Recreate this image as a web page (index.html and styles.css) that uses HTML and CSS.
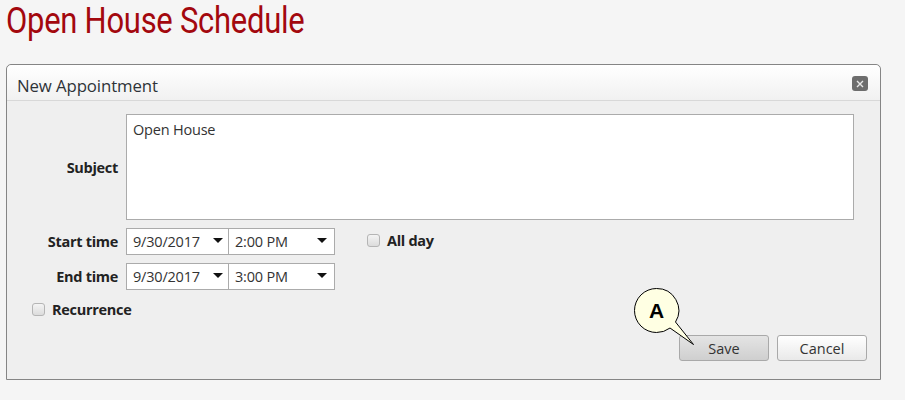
FILE: index.html
```html
<!DOCTYPE html>
<html>
<head>
<meta charset="utf-8">
<link rel="stylesheet" href="styles.css">
</head>
<body>
<h1 class="page-title"><span class="title-text">Open House Schedule</span></h1>
<div class="dialog">
  <div class="dialog-header">
    <span class="dialog-title">New Appointment</span>
    <span class="close-btn"><svg width="10" height="10" viewBox="0 0 10 10"><path d="M2 2L8 8M8 2L2 8" stroke="#e8e8e8" stroke-width="1.4"/></svg></span>
  </div>
  <div class="dialog-body">
    <div class="form-grid">
      <label class="field-label subject-label">Subject</label>
      <div class="subject-box">Open House</div>

      <label class="field-label">Start time</label>
      <div class="control-row">
        <div class="select date-select"><span>9/30/2017</span><span class="caret"></span></div>
        <div class="select time-select"><span>2:00 PM</span><span class="caret"></span></div>
        <div class="check allday"><span class="box"></span><span class="check-label">All day</span></div>
      </div>

      <label class="field-label">End time</label>
      <div class="control-row">
        <div class="select date-select"><span>9/30/2017</span><span class="caret"></span></div>
        <div class="select time-select"><span>3:00 PM</span><span class="caret"></span></div>
      </div>
    </div>
    <div class="check recurrence"><span class="box"></span><span class="check-label">Recurrence</span></div>
    <div class="button-row">
      <div class="btn btn-save">Save
        <svg class="callout" width="70" height="70" viewBox="0 0 70 70">
          <path d="M24.5 2.5 A22 22 0 0 0 24.5 46.5 A22 22 0 0 0 38 42 L61.5 58.5 L43.5 36 A22 22 0 0 0 24.5 2.5 Z" fill="#ffffe3" stroke="#000" stroke-width="1"/>
          <text x="24.5" y="32" text-anchor="middle" class="callout-text">A</text>
        </svg>
      </div>
      <div class="btn btn-cancel">Cancel</div>
    </div>
  </div>
</div>
</body>
</html>
```
FILE: styles.css
```css
html, body {
  margin: 0;
  padding: 0;
  background: #f5f5f5;
}
body {
  font-family: "Open Sans", "Noto Sans", sans-serif;
  color: #333;
}
.page-title {
  margin: 0;
  padding: 1px 0 0 6px;
  height: 64px;
  box-sizing: border-box;
  font-family: Roboto, sans-serif;
  font-weight: 400;
  font-size: 36px;
  line-height: 40px;
  color: #a3080e;
}
.title-text {
  display: inline-block;
  transform: scaleX(0.86);
  transform-origin: left center;
  letter-spacing: -0.3px;
}
.dialog {
  margin-left: 6px;
  width: 875px;
  height: 316px;
  box-sizing: border-box;
  border: 1px solid #858585;
  border-radius: 5px 5px 0 0;
  background: #efefef;
  display: flex;
  flex-direction: column;
}
.dialog-header {
  height: 36px;
  box-sizing: border-box;
  border-bottom: 1px solid #d8d8d8;
  background: linear-gradient(#ffffff, #f1f1f1);
  border-radius: 5px 5px 0 0;
  display: flex;
  align-items: center;
  justify-content: space-between;
  padding: 6px 12px 0 10px;
}
.dialog-title {
  font-size: 16.8px;
  color: #2e3338;
  letter-spacing: -0.1px;
}
.close-btn {
  width: 16px;
  height: 15px;
  border-radius: 3px;
  background: #6d6d6d;
  display: flex;
  align-items: center;
  justify-content: center;
  margin-top: -4px;
}
.dialog-body {
  flex: 1;
  padding: 13px 26px 0 0;
  display: flex;
  flex-direction: column;
}
.form-grid {
  display: grid;
  grid-template-columns: 111px 1fr;
  column-gap: 8px;
  row-gap: 8px;
  align-items: center;
}
.field-label {
  text-align: right;
  font-weight: 700;
  font-size: 14.5px;
  color: #222;
  letter-spacing: -0.3px;
}
.subject-box {
  height: 106px;
  box-sizing: border-box;
  border: 1px solid #ababab;
  background: #fff;
  padding: 5px 6px;
  font-size: 14.5px;
  color: #333;
  letter-spacing: -0.2px;
}
.control-row {
  display: flex;
  align-items: center;
}
.select {
  height: 27px;
  box-sizing: border-box;
  border: 1px solid #ababab;
  background: #fff;
  display: flex;
  align-items: center;
  justify-content: space-between;
  padding: 0 5px 0 6px;
  font-size: 14.5px;
  color: #333;
  letter-spacing: -0.2px;
}
.date-select { width: 103px; }
.time-select { width: 107px; margin-left: -1px; padding-right: 7px; }
.caret {
  width: 0;
  height: 0;
  border-left: 5px solid transparent;
  border-right: 5px solid transparent;
  border-top: 5px solid #111;
  margin-top: -3px;
}
.check {
  display: flex;
  align-items: center;
}
.box {
  width: 13px;
  height: 13px;
  box-sizing: border-box;
  border: 1px solid #b5b5b5;
  border-radius: 3px;
  background: linear-gradient(#f4f4f4, #dcdcdc);
}
.check-label {
  margin-left: 7px;
  font-weight: 700;
  font-size: 14.5px;
  color: #222;
  letter-spacing: -0.3px;
}
.allday {
  margin-left: 32px;
  margin-top: -2px;
}
.recurrence {
  margin: 10px 0 0 25px;
}
.button-row {
  display: flex;
  justify-content: flex-end;
  gap: 8px;
  margin: 16px -13px 0 0;
}
.btn {
  position: relative;
  width: 90px;
  height: 26px;
  box-sizing: border-box;
  border: 1px solid #a9a9a9;
  border-radius: 3px;
  display: flex;
  align-items: center;
  justify-content: center;
  font-size: 14.5px;
  color: #333;
}
.btn-save {
  background: linear-gradient(#e4e4e4, #cfcfcf);
}
.btn-cancel {
  background: linear-gradient(#ffffff, #e9e9e9);
}
.callout {
  position: absolute;
  left: -48px;
  top: -50px;
}
.callout-text {
  font-family: "Liberation Sans", Arial, sans-serif;
  font-weight: 700;
  font-size: 21px;
  fill: #000;
}
```
